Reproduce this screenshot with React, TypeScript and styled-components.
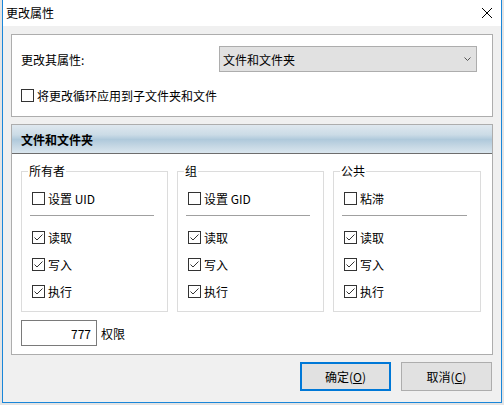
import styled, { createGlobalStyle } from "styled-components";

const GlobalStyle = createGlobalStyle`
  body {
    margin: 0;
    background: #e4e4e4;
    font-family: "Noto Sans CJK SC", "Noto Sans", sans-serif;
    font-size: 12px;
    color: #000;
  }
`;

const Window = styled.div`
  width: 500px;
  height: 403px;
  margin-left: 2px;
  box-sizing: border-box;
  border: 1px solid #1a86d9;
  border-top: none;
  background: #f0f0f0;
  display: flex;
  flex-direction: column;
`;

const TitleBar = styled.div`
  height: 26px;
  flex-shrink: 0;
  background: #fff;
  display: flex;
  align-items: center;
  justify-content: space-between;
  padding: 0 9px 0 3px;
  line-height: 26px;
`;

const Body = styled.div`
  flex: 1;
  padding: 8px 8px 0 8px;
  display: flex;
  flex-direction: column;
`;

const Panel = styled.div<{ $top?: number }>`
  background: #fff;
  border: 1px solid #adadad;
  margin-top: ${p => p.$top ?? 0}px;
  display: flex;
  flex-direction: column;
`;

const TopContent = styled.div`
  padding: 11px 9px 7px;
  display: flex;
  flex-direction: column;
  gap: 10px;
`;

const SelectRow = styled.div`
  display: grid;
  grid-template-columns: 198px 258px;
  align-items: center;
`;

const Select = styled.div`
  height: 26px;
  box-sizing: border-box;
  border: 1px solid #adadad;
  background: #e1e1e1;
  display: flex;
  align-items: center;
  justify-content: space-between;
  padding: 0 5px 0 3px;
`;

const CheckRow = styled.div<{ $indent?: number }>`
  height: 27px;
  display: flex;
  align-items: center;
  gap: 3px;
  padding-left: ${p => p.$indent ?? 0}px;
  line-height: 16px;
`;

const Box = styled.span`
  width: 13px;
  height: 13px;
  box-sizing: border-box;
  border: 1px solid #333;
  background: #fff;
  display: inline-flex;
  flex-shrink: 0;
`;

const Header = styled.div`
  height: 28px;
  border-bottom: 1px solid #6d6d6d;
  background: linear-gradient(
    #dfe8ef 0%,
    #cbdbe6 35%,
    #afc9db 52%,
    #c5d7e4 75%,
    #dae6ee 100%
  );
  display: flex;
  align-items: center;
  padding-left: 9px;
  font-weight: bold;
`;

const LowerContent = styled.div`
  padding: 9px 9px 8px;
  display: flex;
  flex-direction: column;
`;

const Groups = styled.div`
  display: grid;
  grid-template-columns: 147px 147px 148px;
  column-gap: 9px;
`;

const Group = styled.fieldset`
  margin: 0;
  padding: 6px 0 6px;
  border: 1px solid #dcdcdc;
  min-width: 0;
`;

const Legend = styled.legend`
  margin-left: 6px;
  padding: 0 1px;
  line-height: 16px;
`;

const Separator = styled.div`
  height: 1px;
  background: #a0a0a0;
  margin: 3px 13px 8px 8px;
`;

const PermRow = styled.div`
  margin-top: 8px;
  display: flex;
  align-items: center;
  gap: 4px;
`;

const PermInput = styled.div`
  width: 76px;
  height: 26px;
  box-sizing: border-box;
  border: 1px solid #7a7a7a;
  background: #fff;
  display: flex;
  align-items: center;
  justify-content: flex-end;
  padding-right: 5px;
`;

const Footer = styled.div`
  margin-top: 7px;
  display: flex;
  justify-content: flex-end;
  gap: 10px;
  padding-right: 1px;
`;

const Button = styled.button<{ $primary?: boolean }>`
  width: 91px;
  height: 29px;
  box-sizing: border-box;
  background: #e1e1e1;
  border: ${p => (p.$primary ? "2px solid #0078d7" : "1px solid #adadad")};
  font-family: inherit;
  font-size: 12px;
  color: #000;
  padding: 0;
  display: flex;
  align-items: center;
  justify-content: center;
`;

const Check = ({ label, checked, indent }: { label: string; checked?: boolean; indent?: number }) => (
  <CheckRow $indent={indent}>
    <Box>
      {checked && (
        <svg width="11" height="11" viewBox="0 0 11 11">
          <path d="M1.5 5.5 L4 8 L9.5 2.5" fill="none" stroke="#333" strokeWidth="1" />
        </svg>
      )}
    </Box>
    <span>{label}</span>
  </CheckRow>
);

const groups = [
  { title: "所有者", special: "设置 UID" },
  { title: "组", special: "设置 GID" },
  { title: "公共", special: "粘滞" },
];

export default function App() {
  return (
    <>
      <GlobalStyle />
      <Window>
        <TitleBar>
          <span>更改属性</span>
          <svg width="10" height="10" viewBox="0 0 10 10">
            <path d="M0 0 L10 10 M10 0 L0 10" stroke="#000" strokeWidth="1" />
          </svg>
        </TitleBar>
        <Body>
          <Panel>
            <TopContent>
              <SelectRow>
                <span>更改其属性:</span>
                <Select>
                  <span>文件和文件夹</span>
                  <svg width="7" height="4" viewBox="0 0 7 4">
                    <path d="M0.5 0.5 L3.5 3.5 L6.5 0.5" fill="none" stroke="#555" strokeWidth="1" />
                  </svg>
                </Select>
              </SelectRow>
              <Check label="将更改循环应用到子文件夹和文件" />
            </TopContent>
          </Panel>
          <Panel $top={7}>
            <Header>文件和文件夹</Header>
            <LowerContent>
              <Groups>
                {groups.map(g => (
                  <Group key={g.title}>
                    <Legend>{g.title}</Legend>
                    <Check label={g.special} indent={10} />
                    <Separator />
                    <Check label="读取" checked indent={10} />
                    <Check label="写入" checked indent={10} />
                    <Check label="执行" checked indent={10} />
                  </Group>
                ))}
              </Groups>
              <PermRow>
                <PermInput>777</PermInput>
                <span>权限</span>
              </PermRow>
            </LowerContent>
          </Panel>
          <Footer>
            <Button $primary>
              确定(<u>O</u>)
            </Button>
            <Button>
              取消(<u>C</u>)
            </Button>
          </Footer>
        </Body>
      </Window>
    </>
  );
}
